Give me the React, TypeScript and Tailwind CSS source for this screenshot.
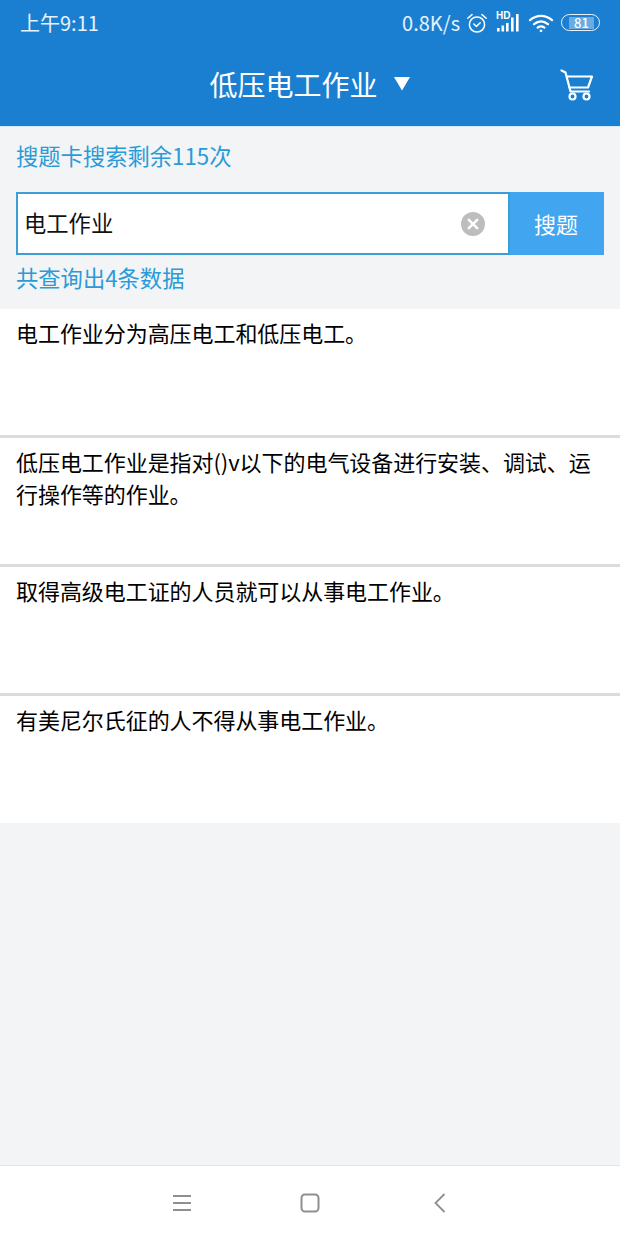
const rows = [
  "电工作业分为高压电工和低压电工。",
  "低压电工作业是指对()v以下的电气设备进行安装、调试、运行操作等的作业。",
  "取得高级电工证的人员就可以从事电工作业。",
  "有美尼尔氏征的人不得从事电工作业。",
]

function StatusIcons() {
  return (
    <div className="flex items-center pb-[1px]">
      <svg width="22" height="22" viewBox="0 0 22 22" fill="none" stroke="white" strokeWidth="1.5" className="ml-[6px]">
        <circle cx="11" cy="12.5" r="7.6" />
        <path d="M7.8 12l2.6 2.4 3.8-3.6" strokeLinecap="round" strokeLinejoin="round" />
        <path d="M1.8 6.2L6 2.6M20.2 6.2L16 2.6" strokeLinecap="round" />
      </svg>
      <div className="relative ml-[8px] h-[22px] w-[24px]">
        <span className="absolute left-0 top-[-2px] font-['Liberation_Sans'] text-[10px] font-bold leading-[12px] text-white">HD</span>
        <svg width="24" height="22" viewBox="0 0 24 22" fill="white" className="absolute left-0 top-0">
          <rect x="1" y="16" width="2.6" height="3.5" />
          <rect x="5.5" y="13.5" width="2.6" height="6" />
          <rect x="10" y="11" width="2.6" height="8.5" />
          <rect x="15" y="5.5" width="2.6" height="14" />
          <rect x="20" y="2" width="2.6" height="17.5" />
        </svg>
      </div>
      <svg width="26" height="20" viewBox="0 0 26 20" fill="none" stroke="white" strokeWidth="2.2" className="ml-[8px]">
        <path d="M2 7.2C8.6 1.4 17.4 1.4 24 7.2" strokeLinecap="round" />
        <path d="M6 11.2C10.4 7.6 15.6 7.6 20 11.2" strokeLinecap="round" />
        <path d="M9.6 14.6C11.8 13 14.2 13 16.4 14.6" strokeLinecap="round" />
        <circle cx="13" cy="17.8" r="1.4" fill="white" stroke="none" />
      </svg>
      <div className="relative ml-[7px] flex h-[17px] w-[39px] items-center rounded-full border-[1.5px] border-white/90">
        <div className="ml-[7px] flex h-[12px] w-[25px] items-center justify-center bg-white/35 text-[13px] font-medium leading-none text-white">
          81
        </div>
      </div>
    </div>
  )
}

function CartIcon() {
  return (
    <svg width="36" height="36" viewBox="0 0 36 36" fill="none" stroke="white" strokeWidth="2.2" strokeLinejoin="round" strokeLinecap="round">
      <path d="M2.5 3.5L6.5 5.5L11.5 24.5H30" />
      <path d="M7.8 9.5H33L29 20.5H10.6" />
      <circle cx="13.5" cy="29.5" r="3" />
      <circle cx="27.5" cy="29.5" r="3" />
    </svg>
  )
}

export default function App() {
  return (
    <div
      className="flex h-[1240px] w-[620px] flex-col overflow-hidden bg-[#f2f4f6]"
      style={{ fontFamily: '"Noto Sans CJK SC", "Noto Sans", sans-serif' }}
    >
      <div className="h-[127px] shrink-0 border-b border-[#d6ebf9] bg-[#1b7fd1] text-white">
        <div className="flex h-[46px] items-center justify-between pl-[20px] pr-[20px]">
          <span className="text-[20px] leading-none text-white/90">上午9:11</span>
          <div className="flex items-center">
            <span className="text-[20px] leading-none text-white/90">0.8K/s</span>
            <StatusIcons />
          </div>
        </div>
        <div className="relative flex h-[80px] items-center justify-center pb-[5px]">
          <span className="text-[28px] leading-none">低压电工作业</span>
          <svg width="18" height="15" viewBox="0 0 18 15" fill="white" className="ml-[15px]">
            <path d="M1 1H17L9 14.5Z" />
          </svg>
          <div className="absolute right-[25px] top-[21px]">
            <CartIcon />
          </div>
        </div>
      </div>

      <div className="h-[65px] shrink-0 px-4 pt-[12px] text-[22.3px] leading-[32px] text-[#2b9bd8]">搜题卡搜索剩余115次</div>

      <div className="mx-4 flex h-[63px] shrink-0">
        <div className="flex flex-1 items-center border-2 border-[#3a9fd6] bg-white pl-[6px] pr-[23px]">
          <span className="-translate-y-px flex-1 text-[22.3px] leading-none text-[#111]">电工作业</span>
          <svg width="24" height="24" viewBox="0 0 24 24">
            <circle cx="12" cy="12" r="12" fill="#bdbdbd" />
            <path d="M7.8 7.8L16.2 16.2M16.2 7.8L7.8 16.2" stroke="white" strokeWidth="2.6" strokeLinecap="round" />
          </svg>
        </div>
        <div className="flex w-[94px] items-center justify-center bg-[#42a5f0] pr-[2px] text-[22px] leading-none text-white">
          <span className="-translate-y-px">搜题</span>
        </div>
      </div>

      <div className="h-[54px] shrink-0 px-4 pt-[6px] text-[22.3px] leading-[32px] text-[#2b9bd8]">共查询出4条数据</div>

      <div className="flex flex-col">
        {rows.map((text, i) => (
          <div
            key={text}
            className={
              i < rows.length - 1
                ? "h-[129px] border-b-[3px] border-[#dcdcdc] bg-white px-4 pt-[7px] text-[22px] leading-[32px] tracking-[-0.06px] text-black"
                : "h-[127px] bg-white px-4 pt-[7px] text-[22px] leading-[32px] tracking-[-0.06px] text-black"
            }
          >
            {text}
          </div>
        ))}
      </div>

      <div className="mt-auto flex h-[75px] shrink-0 items-start border-t border-[#e4e4e4] bg-white">
        <div className="relative h-full w-full">
          <svg width="20" height="18" viewBox="0 0 20 18" fill="none" stroke="#8f8f8f" strokeWidth="2" className="absolute left-[172px] top-[28px]">
            <path d="M1 2H19M1 9H19M1 16H19" />
          </svg>
          <svg width="20" height="20" viewBox="0 0 20 20" fill="none" stroke="#8f8f8f" strokeWidth="2" className="absolute left-[300px] top-[27px]">
            <rect x="1.5" y="1.5" width="17" height="17" rx="3.5" />
          </svg>
          <svg width="14" height="22" viewBox="0 0 14 22" fill="none" stroke="#8f8f8f" strokeWidth="1.8" className="absolute left-[433px] top-[26px]">
            <path d="M11.5 2L2.5 11L11.5 20" />
          </svg>
        </div>
      </div>
    </div>
  )
}
